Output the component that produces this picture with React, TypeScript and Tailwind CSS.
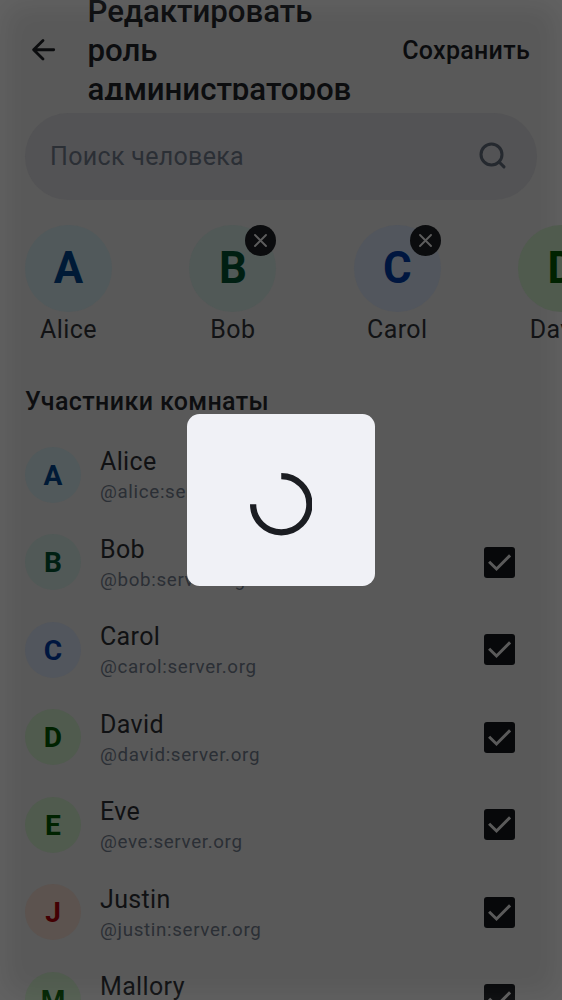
type Tone = { bg: string; fg: string };

const tones: Record<string, Tone> = {
  A: { bg: "bg-[#51595b]", fg: "text-[#001a36]" },
  B: { bg: "bg-[#515957]", fg: "text-[#001f12]" },
  C: { bg: "bg-[#52565d]", fg: "text-[#00163f]" },
  D: { bg: "bg-[#505b4e]", fg: "text-[#002200]" },
  E: { bg: "bg-[#505b4e]", fg: "text-[#002200]" },
  J: { bg: "bg-[#5c534f]", fg: "text-[#430003]" },
  M: { bg: "bg-[#505b4e]", fg: "text-[#002200]" },
};

const selected = [
  { name: "Alice", removable: false },
  { name: "Bob", removable: true },
  { name: "Carol", removable: true },
  { name: "David", removable: true },
];

const members = [
  { name: "Alice", checkable: false },
  { name: "Bob", checkable: true },
  { name: "Carol", checkable: true },
  { name: "David", checkable: true },
  { name: "Eve", checkable: true },
  { name: "Justin", checkable: true },
  { name: "Mallory", checkable: true },
];

function Avatar({ name, large = false }: { name: string; large?: boolean }) {
  const tone = tones[name[0]];
  const size = large
    ? "size-[87px] text-[43.75px]"
    : "size-[56px] pt-[2px] text-[28.1px]";
  return (
    <div className={`flex shrink-0 items-center justify-center rounded-full leading-none font-bold ${size} ${tone.bg} ${tone.fg}`}>
      {name[0]}
    </div>
  );
}

function Header() {
  return (
    <header className="flex h-[100px] shrink-0 items-center overflow-hidden pr-8 pl-[25px]">
      <svg className="size-[37.5px] shrink-0" viewBox="0 0 37.5 37.5" fill="none" stroke="#0b0c0e" strokeWidth="2.8" strokeLinecap="round" strokeLinejoin="round">
        <path d="M28.7 18.75H8.8M18 9.4l-9.4 9.35L18 28.1" />
      </svg>
      <h1 className="ml-[25px] w-[290px] text-[31.25px] leading-[39px] font-medium tracking-[-0.07px] text-[#0c0d0f]">
        Редактировать роль администраторов
      </h1>
      <button className="mt-px ml-auto text-[25px] leading-[37.5px] font-medium tracking-[0.3px] text-[#0b0c0e]">
        Сохранить
      </button>
    </header>
  );
}

function SearchBar() {
  return (
    <div className="mx-[25px] mt-[13px] flex h-[87px] shrink-0 items-center justify-between rounded-full bg-[#535355] px-[25px] text-[#2b2f35]">
      <span className="text-[25px] leading-[37.5px] tracking-[0.32px]">Поиск человека</span>
      <svg className="size-[37.5px]" viewBox="0 0 37.5 37.5" fill="none" stroke="#25292f" strokeWidth="3" strokeLinecap="round">
        <circle cx="16.5" cy="16.5" r="10.5" />
        <path d="m24.1 24 4.9 4.9" />
      </svg>
    </div>
  );
}

function SelectedPerson({ name, removable }: { name: string; removable: boolean }) {
  return (
    <div className="relative flex w-[87px] shrink-0 flex-col items-center">
      <Avatar name={name} large />
      <span className="text-[25px] leading-[35px] tracking-[0.39px] text-[#121315]">{name}</span>
      {removable && (
        <div className="absolute top-0 right-0 flex size-[31px] items-center justify-center rounded-full bg-[#0b0c0e]">
          <svg className="size-[13px]" viewBox="0 0 13 13" fill="none" stroke="#5d5d5d" strokeWidth="1.9" strokeLinecap="round">
            <path d="m1 1 11 11M12 1 1 12" />
          </svg>
        </div>
      )}
    </div>
  );
}

function MemberRow({ name, checkable }: { name: string; checkable: boolean }) {
  return (
    <div className="flex h-[87.5px] shrink-0 items-center pr-[47px] pl-[25px]">
      <Avatar name={name} />
      <div className="ml-[19px] flex flex-col pt-[2px]">
        <span className="text-[25px] leading-[34px] tracking-[0.35px] text-[#101113]">{name}</span>
        <span className="text-[18.75px] leading-[27px] tracking-[0.66px] text-[#2b2f35]">
          @{name.toLowerCase()}:server.org
        </span>
      </div>
      {checkable && (
        <div className="ml-auto flex size-[31px] items-center justify-center rounded-[3px] bg-[#07080a]">
          <svg className="size-[31px]" viewBox="0 0 31 31" fill="none" stroke="#5a5a5a" strokeWidth="3">
            <path d="m5.1 14.7 7.4 7.3L26.1 8.4" />
          </svg>
        </div>
      )}
    </div>
  );
}

export default function App() {
  return (
    <main className="relative flex h-[1000px] w-[562px] flex-col overflow-hidden bg-[#595959] font-[Roboto,sans-serif]">
      <div className="pointer-events-none absolute inset-0 shadow-[inset_0_0_30px_4px_rgba(255,255,255,0.065)]" />
      <Header />
      <SearchBar />
      <div className="mt-[25px] flex shrink-0 gap-[77.4px] overflow-hidden pl-[25px]">
        {selected.map((person) => (
          <SelectedPerson key={person.name} {...person} />
        ))}
      </div>
      <h2 className="mt-[35.5px] shrink-0 pl-[25px] text-[25px] leading-[37.5px] font-medium tracking-[0.39px] text-[#0d0e10]">
        Участники комнаты
      </h2>
      <div className="mt-[11px] flex shrink-0 flex-col">
        {members.map((member) => (
          <MemberRow key={member.name} {...member} />
        ))}
      </div>
      <div className="absolute inset-0 flex items-center justify-center">
        <div className="flex h-[172px] w-[187.5px] items-center justify-center rounded-[12.5px] bg-[#f0f1f6] pt-[9px]">
          <svg className="size-[62.5px]" viewBox="0 0 40 40" fill="none" stroke="#1b1d22" strokeWidth="4">
            <path d="M20 2a18 18 0 1 1-18 18" />
          </svg>
        </div>
      </div>
    </main>
  );
}
